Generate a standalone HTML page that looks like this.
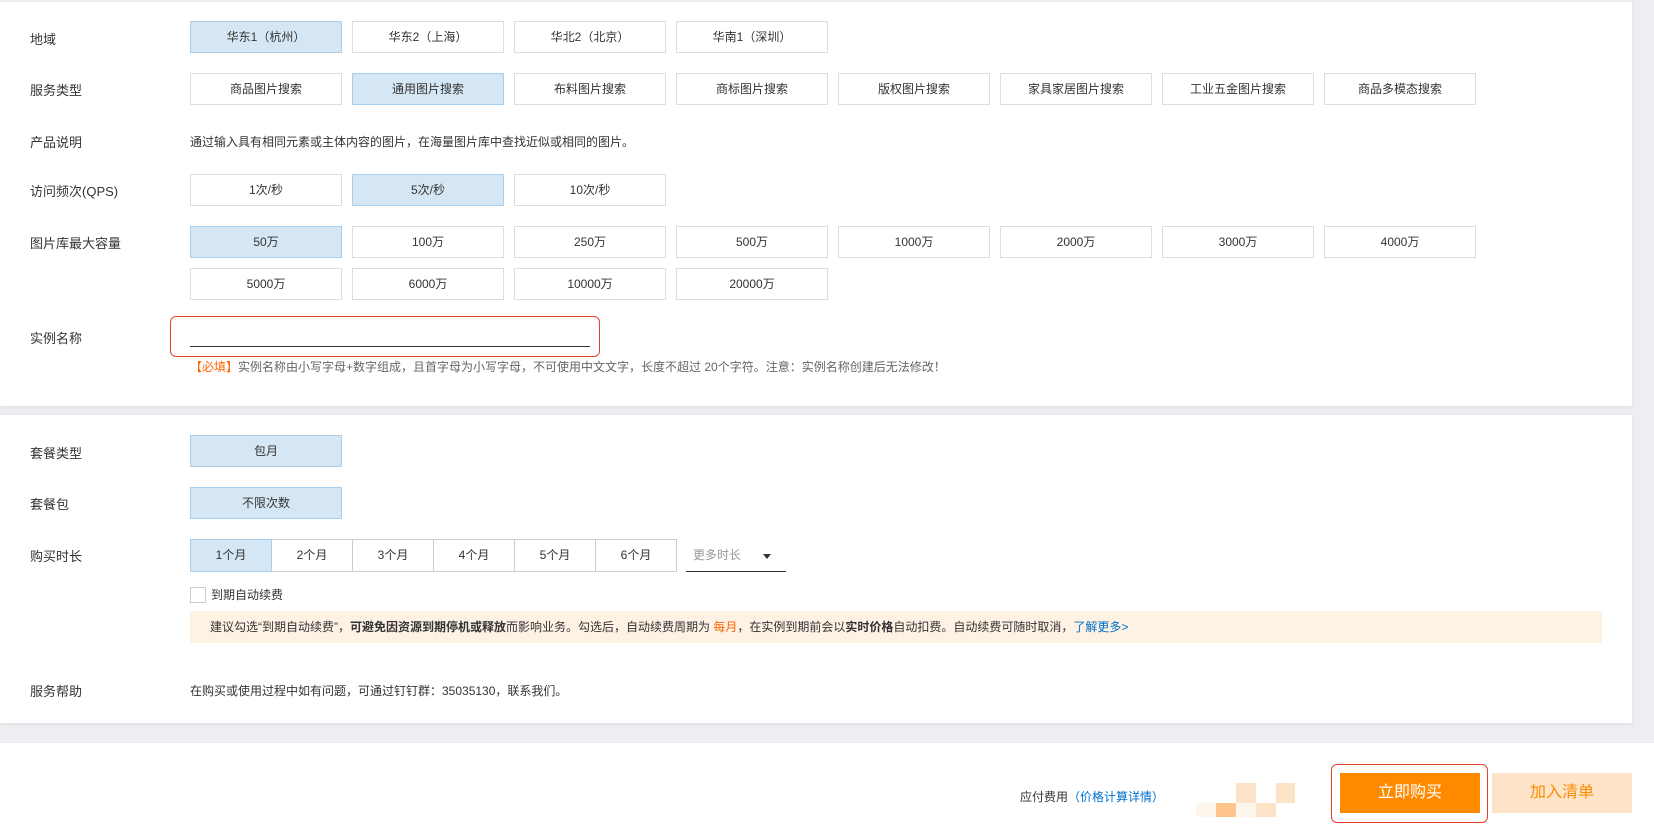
<!DOCTYPE html>
<html><head><meta charset="utf-8"><style>
*{margin:0;padding:0;box-sizing:border-box}
body{width:1654px;height:828px;background:#fff;position:relative;overflow:hidden;font-family:"Liberation Sans","Noto Sans CJK SC",sans-serif;color:#333;font-size:12px}
.a{position:absolute}
.gray{background:#eceef1}
.panel{background:#fff;box-shadow:0 1px 3px rgba(0,0,0,.08)}
.lbl{position:absolute;left:30px;font-size:13px;color:#333;line-height:16px}
.b{position:absolute;width:152px;height:32px;border:1px solid #ddd;background:#fff;text-align:center;line-height:30px;font-size:12px;color:#333}
.s{background:#d5e7f5;border-color:#a9cfee}
.m{position:absolute;top:539px;height:33px;width:82px;border:1px solid #ccc;text-align:center;line-height:31px;background:#fff}
.m.s{background:#d5e7f5;border-color:#a9cfee}
</style></head><body>
<div class="a gray" style="left:0;top:0;width:1654px;height:743px"></div>
<div class="a panel" style="left:0;top:2px;width:1632px;height:404px"></div>
<div class="a panel" style="left:0;top:415px;width:1632px;height:308px"></div>

<div class="lbl" style="top:32px">地域</div>
<div class="b s" style="left:190px;top:21px">华东1（杭州）</div>
<div class="b" style="left:352px;top:21px">华东2（上海）</div>
<div class="b" style="left:514px;top:21px">华北2（北京）</div>
<div class="b" style="left:676px;top:21px">华南1（深圳）</div>

<div class="lbl" style="top:83px">服务类型</div>
<div class="b" style="left:190px;top:73px">商品图片搜索</div>
<div class="b s" style="left:352px;top:73px">通用图片搜索</div>
<div class="b" style="left:514px;top:73px">布料图片搜索</div>
<div class="b" style="left:676px;top:73px">商标图片搜索</div>
<div class="b" style="left:838px;top:73px">版权图片搜索</div>
<div class="b" style="left:1000px;top:73px">家具家居图片搜索</div>
<div class="b" style="left:1162px;top:73px">工业五金图片搜索</div>
<div class="b" style="left:1324px;top:73px">商品多模态搜索</div>

<div class="lbl" style="top:135px">产品说明</div>
<div class="a" style="left:190px;top:134px;line-height:16px">通过输入具有相同元素或主体内容的图片，在海量图片库中查找近似或相同的图片。</div>

<div class="lbl" style="top:184px">访问频次(QPS)</div>
<div class="b" style="left:190px;top:174px">1次/秒</div>
<div class="b s" style="left:352px;top:174px">5次/秒</div>
<div class="b" style="left:514px;top:174px">10次/秒</div>

<div class="lbl" style="top:236px">图片库最大容量</div>
<div class="b s" style="left:190px;top:226px">50万</div>
<div class="b" style="left:352px;top:226px">100万</div>
<div class="b" style="left:514px;top:226px">250万</div>
<div class="b" style="left:676px;top:226px">500万</div>
<div class="b" style="left:838px;top:226px">1000万</div>
<div class="b" style="left:1000px;top:226px">2000万</div>
<div class="b" style="left:1162px;top:226px">3000万</div>
<div class="b" style="left:1324px;top:226px">4000万</div>
<div class="b" style="left:190px;top:268px">5000万</div>
<div class="b" style="left:352px;top:268px">6000万</div>
<div class="b" style="left:514px;top:268px">10000万</div>
<div class="b" style="left:676px;top:268px">20000万</div>

<div class="lbl" style="top:331px">实例名称</div>
<div class="a" style="left:170px;top:316px;width:430px;height:41px;border:1px solid #e8412c;border-radius:6px"></div>
<div class="a" style="left:190px;top:346px;width:400px;height:1px;background:#333"></div>
<div class="a" style="left:190px;top:359px;line-height:16px;color:#666;white-space:nowrap"><span style="color:#f60">【必填】</span>实例名称由小写字母+数字组成，且首字母为小写字母，不可使用中文文字，长度不超过 20个字符。注意：实例名称创建后无法修改！</div>

<div class="lbl" style="top:446px">套餐类型</div>
<div class="b s" style="left:190px;top:435px">包月</div>
<div class="lbl" style="top:497px">套餐包</div>
<div class="b s" style="left:190px;top:487px">不限次数</div>

<div class="lbl" style="top:549px">购买时长</div>
<div class="m" style="left:271px">2个月</div>
<div class="m" style="left:352px">3个月</div>
<div class="m" style="left:433px">4个月</div>
<div class="m" style="left:514px">5个月</div>
<div class="m" style="left:595px">6个月</div>
<div class="m s" style="left:190px">1个月</div>
<div class="a" style="left:686px;top:539px;width:100px;height:33px;border-bottom:1px solid #333;line-height:32px;padding-left:7px;color:#999">更多时长</div>
<div class="a" style="left:763px;top:554px;width:0;height:0;border-left:4px solid transparent;border-right:4px solid transparent;border-top:5px solid #333"></div>

<div class="a" style="left:190px;top:587px;width:16px;height:16px;border:1px solid #ccc;background:#fff"></div>
<div class="a" style="left:211px;top:587px;line-height:16px">到期自动续费</div>
<div class="a" style="left:190px;top:611px;width:1412px;height:32px;background:#fdf2e4;line-height:32px;padding-left:20px;white-space:nowrap">建议勾选“到期自动续费”，<b>可避免因资源到期停机或释放</b>而影响业务。勾选后，自动续费周期为 <span style="color:#f60">每月</span>，在实例到期前会以<b>实时价格</b>自动扣费。自动续费可随时取消，<span style="color:#0070cc">了解更多&gt;</span></div>

<div class="lbl" style="top:684px">服务帮助</div>
<div class="a" style="left:190px;top:683px;line-height:16px">在购买或使用过程中如有问题，可通过钉钉群：35035130，联系我们。</div>

<div class="a" style="left:1020px;top:789px;line-height:16px">应付费用<span style="color:#0070cc">（价格计算详情）</span></div>
<div class="a" style="left:1236px;top:783px;width:20px;height:20px;background:#fde4c8"></div>
<div class="a" style="left:1276px;top:783px;width:19px;height:20px;background:#fde4c8"></div>
<div class="a" style="left:1196px;top:803px;width:20px;height:14px;background:#fef5ec"></div>
<div class="a" style="left:1216px;top:803px;width:20px;height:14px;background:#fdc58a"></div>
<div class="a" style="left:1236px;top:803px;width:20px;height:14px;background:#fef5ec"></div>
<div class="a" style="left:1256px;top:803px;width:20px;height:14px;background:#fde4c8"></div>

<div class="a" style="left:1331px;top:764px;width:157px;height:59px;border:1px solid #e8412c;border-radius:6px"></div>
<div class="a" style="left:1340px;top:773px;width:140px;height:40px;background:#ff8a00;color:#fff;font-size:16px;text-align:center;line-height:40px">立即购买</div>
<div class="a" style="left:1492px;top:773px;width:140px;height:40px;background:#fde4c8;color:#ff8a00;font-size:16px;text-align:center;line-height:40px">加入清单</div>
</body></html>
